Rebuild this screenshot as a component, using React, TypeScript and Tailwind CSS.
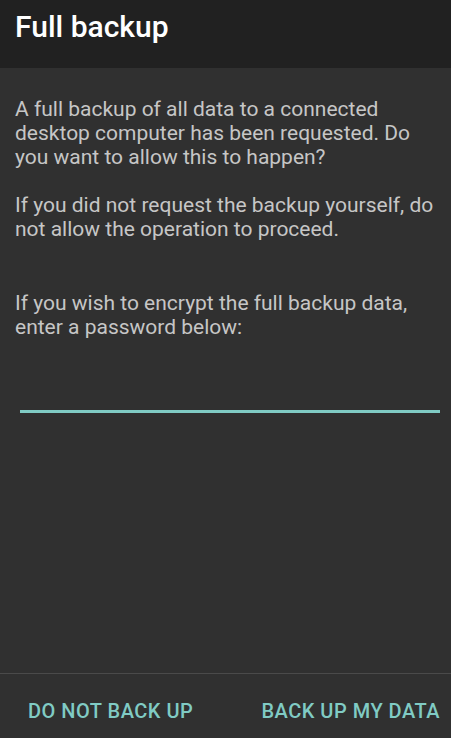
export default function App() {
  return (
    <div
      className="flex h-[738px] w-[451px] flex-col bg-[#303030]"
      style={{ fontFamily: "Roboto, 'Noto Sans', sans-serif" }}
    >
      <header className="flex h-[68px] shrink-0 items-start bg-[#212121] px-[15px] pt-[9px]">
        <h1 className="text-[30px] font-medium leading-[36px] text-white">Full backup</h1>
      </header>

      <main className="flex flex-1 flex-col pl-[15px] pr-[12px] pt-[29px] text-[21px] leading-[24px] text-[#c6c6c6]">
        <p>
          A full backup of all data to a connected desktop computer has been requested. Do you want
          to allow this to happen?
        </p>
        <p className="mt-[24px]">
          If you did not request the backup yourself, do not allow the operation to proceed.
        </p>
        <p className="mt-[50px]">
          If you wish to encrypt the full backup data, enter a password below:
        </p>
        <div className="ml-[5px] mt-[71px] h-[3px] w-[420px] bg-[#80cbc4]" />
      </main>

      <footer className="flex h-[65px] shrink-0 items-start justify-between border-t border-[#4a4a4a] pl-[28px] pr-[11px] pt-[25px]">
        <button className="text-[20px] font-medium leading-[24px] tracking-[0.5px] text-[#80cbc4]">DO NOT BACK UP</button>
        <button className="text-[20px] font-medium leading-[24px] tracking-[0.5px] text-[#80cbc4]">BACK UP MY DATA</button>
      </footer>
    </div>
  );
}
